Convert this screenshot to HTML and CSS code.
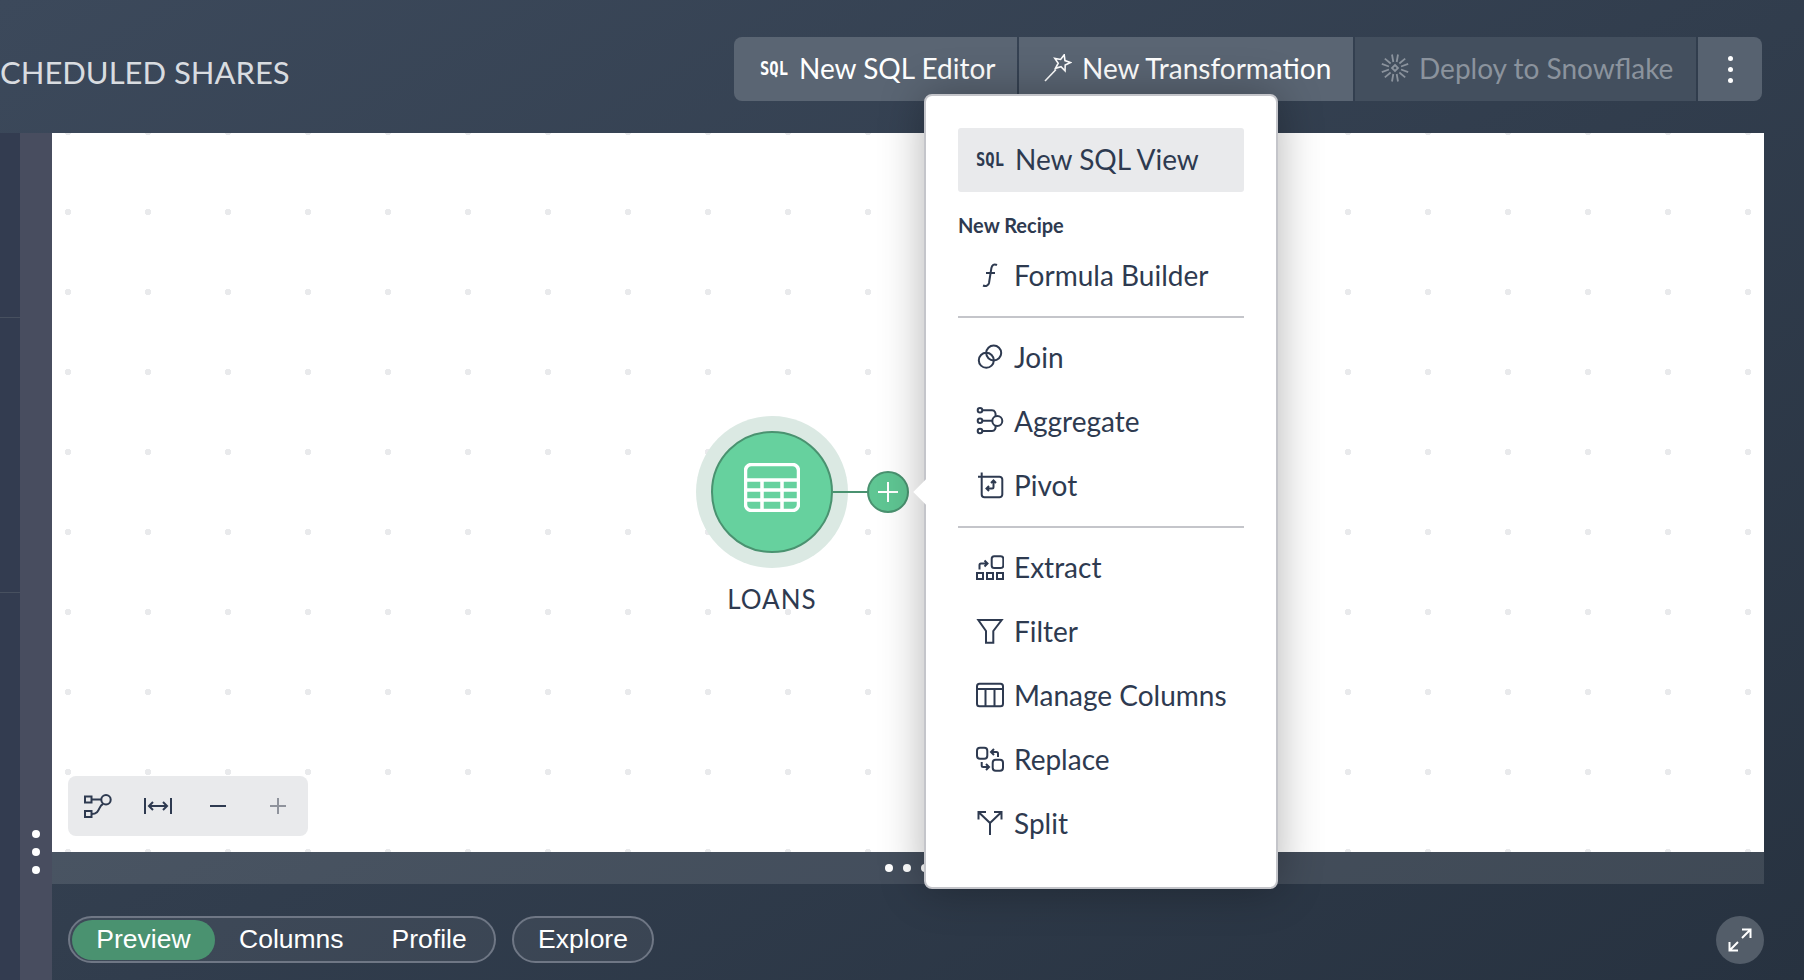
FILE: index.html
```html
<!DOCTYPE html>
<html lang="en">
<head>
  <meta charset="UTF-8">
  <meta name="viewport" content="width=device-width, initial-scale=1.0">
  <title>Scheduled Shares</title>
  <link rel="stylesheet" href="styles.css">
</head>
<body>
  <div class="page">
    <header class="topbar">
      <h1 class="title">CHEDULED SHARES</h1>
      <div class="actions">
        <button class="action first"><span class="sql">SQL</span>New SQL Editor</button>
        <button class="action second">
          <svg class="icon wand" viewBox="0 0 28 28"><path d="M1 27 12 15.500"/><path d="M20.200.8l.75 5.800 5.550 1.950-5.300 2.520-.15 5.830-4.050-4.230-5.600 1.680 2.800-5.150-3.330-4.830 5.770 1.080z"/></svg>
          New Transformation
        </button>
        <button class="action disabled">
          <svg class="icon flake" viewBox="0 0 30 30">
            <defs><path id="arm" d="M12 1.500l1.300 7.500M18 1.500L16.700 9"/></defs>
            <use href="#arm"/>
            <use href="#arm" transform="rotate(60 15 15)"/>
            <use href="#arm" transform="rotate(120 15 15)"/>
            <use href="#arm" transform="rotate(180 15 15)"/>
            <use href="#arm" transform="rotate(240 15 15)"/>
            <use href="#arm" transform="rotate(300 15 15)"/>
            <path d="M15 12 18 15 15 18 12 15z"/>
          </svg>
          Deploy to Snowflake
        </button>
        <button class="action more"><i></i><i></i><i></i></button>
      </div>
    </header>

    <div class="workspace">
      <div class="strip"></div>
      <div class="rail"><i></i><i></i><i></i></div>
      <div class="content">
        <section class="canvas">
          <div class="node">
            <div class="node-ring">
              <div class="node-circle">
                <svg class="table-icon" viewBox="0 0 56 49">
                  <rect x="1.500" y="1.500" width="53" height="46" rx="6"/>
                  <path d="M1.500 17h53M1.500 27h53M1.500 37h53M18 17v30.500M38 17v30.500"/>
                </svg>
              </div>
            </div>
            <div class="node-link"></div>
            <div class="node-add">
              <svg viewBox="0 0 22 22"><path d="M11 1v20M1 11h20"/></svg>
            </div>
            <div class="node-label">LOANS</div>
          </div>

          <div class="canvas-tools">
            <svg class="tool wide" viewBox="0 0 28 24"><rect x="1" y="2.500" width="6.500" height="6"/><rect x="1" y="17" width="6.500" height="6"/><circle cx="22" cy="5.700" r="4.700"/><path d="M7.500 5.500h9.800M19 10c-5 2-2.500 10-11.500 10"/></svg>
            <svg class="tool wide" viewBox="0 0 28 24"><path d="M1 4v16M27 4v16M5 12h18M9 8l-4 4 4 4M19 8l4 4-4 4"/></svg>
            <svg class="tool" viewBox="0 0 16 16"><path d="M0 8h16"/></svg>
            <svg class="tool off" viewBox="0 0 16 16"><path d="M0 8h16M8 0v16"/></svg>
          </div>
        </section>

        <div class="resizer"><i></i><i></i><i></i></div>

        <footer class="tabs">
          <div class="pill-group">
            <span class="pill active">Preview</span>
            <span class="pill">Columns</span>
            <span class="pill">Profile</span>
          </div>
          <div class="pill-group single">
            <span class="pill">Explore</span>
          </div>
          <button class="expand">
            <svg viewBox="0 0 24 24"><path d="M14 1.500h8.500V10M22.500 1.500l-8.500 8.500M10 22.500H1.500V14M1.500 22.500l8.500-8.500"/></svg>
          </button>
        </footer>
      </div>
    </div>

    <div class="menu">
      <div class="menu-arrow"></div>
      <div class="menu-item selected"><span class="sql">SQL</span>New SQL View</div>
      <div class="menu-label">New Recipe</div>
      <div class="menu-item">
        <svg class="icon" viewBox="0 0 28 28"><path d="M21 4c-3-1.500-5 0-5.600 3L13 22c-.6 3-3.500 3.500-6 2.500M10 12h9"/></svg>
        Formula Builder
      </div>
      <hr class="menu-rule">
      <div class="menu-item">
        <svg class="icon" viewBox="0 0 28 28"><circle cx="10.300" cy="17.300" r="7.500"/><circle cx="17.700" cy="10" r="7.500"/></svg>
        Join
      </div>
      <div class="menu-item">
        <svg class="icon" viewBox="0 0 28 28"><circle cx="4" cy="3.300" r="2.300"/><circle cx="4" cy="13.700" r="2.300"/><circle cx="4" cy="24" r="2.300"/><circle cx="21.300" cy="14" r="5"/><path d="M6.500 3.300H16c3 0 4 3 3.500 6M6.500 13.800H16M6.500 24H16c3 0 4-3 3.500-5.500"/></svg>
        Aggregate
      </div>
      <div class="menu-item">
        <svg class="icon" viewBox="0 0 28 28"><path d="M5.700 1.500v22c0 1.500 1 2.800 2.800 2.800h15c1.500 0 2.800-1.300 2.800-2.800v-15c0-1.500-1.300-2.800-2.800-2.800H2"/><path d="M17.500 10v6c0 1-.5 1.500-1.500 1.500h-5.500M15 12l2.500-2.500L20 12M13 15l-2.500 2.500L13 20"/></svg>
        Pivot
      </div>
      <hr class="menu-rule">
      <div class="menu-item">
        <svg class="icon" viewBox="0 0 28 28"><rect x="15.700" y="3.300" width="11.600" height="11.700" rx="2.500"/><rect x="1" y="20" width="6" height="6"/><rect x="11" y="20" width="6" height="6"/><rect x="21" y="20" width="6" height="6"/><path d="M3.500 16.500V12c0-1 .5-1.500 1.500-1.500h6M8.500 7.500l3 3-3 3"/></svg>
        Extract
      </div>
      <div class="menu-item">
        <svg class="icon" viewBox="0 0 28 28"><path d="M2.300 3h23.400l-8.400 11v11.700H10V14z"/></svg>
        Filter
      </div>
      <div class="menu-item">
        <svg class="icon" viewBox="0 0 28 28"><rect x="1" y="2.700" width="26" height="22.600" rx="2.500"/><path d="M1 8h26M9.500 8v17M18.500 8v17"/></svg>
        Manage Columns
      </div>
      <div class="menu-item">
        <svg class="icon" viewBox="0 0 28 28"><rect x="1" y="2.700" width="10.300" height="11" rx="3"/><rect x="16.700" y="14.700" width="10.300" height="11" rx="3"/><path d="M22 12V8.500c0-1-.5-1.500-1.500-1.500H15.500M18 4l-3 3 3 3M5.700 17v3.500c0 1 .5 1.500 1.500 1.500h5M10 19l3 3-3 3"/></svg>
        Replace
      </div>
      <div class="menu-item">
        <svg class="icon" viewBox="0 0 28 28"><path d="M14 26V14L3 3.500M14 14 25 3.500M2.500 10.500V3H10M18 3h7.500v7.500"/></svg>
        Split
      </div>
    </div>
  </div>
</body>
</html>
```

FILE: styles.css
```css
* {
  box-sizing: border-box;
}
html, body {
  margin: 0;
  padding: 0;
  height: 100%;
}
body {
  font-family: Lato, "Open Sans", sans-serif;
  color: #2e3a50;
  overflow: hidden;
}
button {
  border: none;
  font: inherit;
  cursor: pointer;
}
.page {
  position: relative;
  width: 1804px;
  height: 980px;
  overflow: hidden;
  display: flex;
  flex-direction: column;
  background: linear-gradient(150deg, #3c495b, #273240);
}

/* top bar */
.topbar {
  height: 133px;
  flex: none;
  display: flex;
  justify-content: space-between;
  padding: 37px 42px 0 0;
}
.title {
  margin: 16px 0 0;
  font-size: 31px;
  line-height: 38px;
  font-weight: 400;
  color: #d9dce0;
  white-space: nowrap;
}
.actions {
  display: flex;
  height: 64px;
  gap: 2px;
}
.action {
  display: flex;
  align-items: center;
  flex: none;
  height: 64px;
  color: #fff;
  background: #5a6573;
  font-size: 28px;
  white-space: nowrap;
  padding: 0 0 2px 25px;
}
.action.first {
  width: 283px;
  padding-left: 26px;
  border-radius: 8px 0 0 8px;
}
.action.second {
  width: 334px;
}
.action.disabled {
  width: 341px;
  background: #434f5e;
  color: #8b939d;
}
.action.more {
  width: 64px;
  padding: 0;
  gap: 6px;
  flex-direction: column;
  justify-content: center;
  border-radius: 0 8px 8px 0;
  background: #576270;
}
.action.more i {
  width: 5px;
  height: 5px;
  border-radius: 50%;
  background: #fff;
}
.sql {
  display: inline-block;
  width: 28px;
  margin-right: 11px;
  font-family: "DejaVu Sans Mono", monospace;
  font-weight: 700;
  font-size: 15.500px;
  transform: translateY(1px) scaleY(1.25);
}
.icon {
  width: 28px;
  height: 28px;
  flex: none;
  margin-right: 10px;
  fill: none;
  stroke: currentColor;
  stroke-width: 2;
}
.wand {
  stroke-width: 1.6;
}
.flake {
  width: 30px;
  height: 30px;
  margin-right: 9px;
  stroke-width: 1.8;
}

/* main area */
.workspace {
  flex: 1;
  display: flex;
  min-height: 0;
}
.strip {
  width: 20px;
  background: #333c50;
  background-image: linear-gradient(#47505f, #47505f), linear-gradient(#47505f, #47505f);
  background-size: 100% 1px;
  background-repeat: no-repeat;
  background-position: 0 184px, 0 459px;
}
.rail {
  width: 32px;
  background: #484d5f;
  display: flex;
  flex-direction: column;
  align-items: center;
  gap: 10px;
  padding-top: 697px;
}
.rail i,
.resizer i {
  width: 8px;
  height: 8px;
  border-radius: 50%;
  background: #fff;
  flex: none;
}
.content {
  width: 1712px;
  display: flex;
  flex-direction: column;
}
.canvas {
  position: relative;
  height: 719px;
  background-color: #fff;
  background-image: radial-gradient(circle at 40px 40px, #e9eaec 3px, transparent 3.5px);
  background-size: 80px 80px;
  background-position: -24px -41px;
}

/* node on the canvas */
.node {
  position: absolute;
  left: 644px;
  top: 283px;
  width: 240px;
  height: 200px;
}
.node-ring {
  width: 152px;
  height: 152px;
  border-radius: 50%;
  background: #dbe9e3;
  display: flex;
  align-items: center;
  justify-content: center;
}
.node-circle {
  width: 122px;
  height: 122px;
  border-radius: 50%;
  background: #66d19e;
  border: 2px solid #4a9270;
  display: flex;
  align-items: center;
  justify-content: center;
}
.table-icon {
  width: 56px;
  height: 49px;
  margin-bottom: 9px;
  fill: none;
  stroke: #fff;
  stroke-width: 3.500;
}
.node-link {
  position: absolute;
  left: 137px;
  top: 75px;
  width: 36px;
  height: 2px;
  background: #4a9270;
}
.node-add {
  position: absolute;
  left: 171px;
  top: 55px;
  width: 42px;
  height: 42px;
  border-radius: 50%;
  background: #5fc693;
  border: 2px solid #4a9270;
  display: flex;
  align-items: center;
  justify-content: center;
}
.node-add svg {
  width: 22px;
  height: 22px;
  fill: none;
  stroke: #fff;
  stroke-width: 2;
}
.node-label {
  position: absolute;
  left: 0;
  top: 168px;
  width: 152px;
  text-align: center;
  font-size: 26px;
  letter-spacing: 1px;
  line-height: 30px;
}

/* zoom tools */
.canvas-tools {
  position: absolute;
  left: 16px;
  bottom: 16px;
  width: 240px;
  height: 60px;
  border-radius: 8px;
  background: #e9eaec;
  display: flex;
  align-items: center;
  padding-left: 16px;
  gap: 32px;
}
.tool {
  width: 16px;
  height: 16px;
  flex: none;
  fill: none;
  stroke: #2e3a50;
  stroke-width: 2;
  margin-left: 6px;
}
.tool.wide {
  width: 28px;
  height: 24px;
  margin-left: 0;
}
.tool.off {
  stroke: #8f939c;
  margin-left: 12px;
}

.resizer {
  height: 32px;
  background: rgba(255, 255, 255, .11);
  display: flex;
  align-items: center;
  gap: 10px;
  padding-left: 833px;
}

/* tabs at the bottom */
.tabs {
  flex: 1;
  display: flex;
  align-items: flex-start;
  padding: 32px 0 0 16px;
  gap: 16px;
}
.pill-group {
  display: flex;
  align-items: center;
  height: 47px;
  padding: 0 2px;
  border: 2px solid #6f7785;
  border-radius: 24px;
  background: rgba(255, 255, 255, .06);
  width: 428px;
}
.pill-group.single {
  width: 142px;
  justify-content: center;
}
.pill {
  font-family: "Liberation Sans", Arial, sans-serif;
  font-size: 26.500px;
  color: #fff;
  height: 40px;
  line-height: 39px;
  padding: 0 24px;
  border-radius: 20px;
  white-space: nowrap;
}
.pill.active {
  background: #4a9270;
  width: 143px;
  text-align: center;
  padding: 0;
  margin-right: 0;
}
.expand {
  width: 48px;
  height: 48px;
  margin-left: auto;
  padding: 0;
  border-radius: 50%;
  background: #535d69;
  display: flex;
  align-items: center;
  justify-content: center;
}
.expand svg {
  width: 24px;
  height: 24px;
  fill: none;
  stroke: #fff;
  stroke-width: 2;
}

/* popup menu */
.menu {
  position: absolute;
  left: 924px;
  top: 94px;
  width: 354px;
  height: 795px;
  padding: 32px 32px 0;
  background: #fff;
  border: 2px solid #c4c5ca;
  border-radius: 8px;
  box-shadow: 0 0 45px rgba(0, 0, 0, .3);
}
.menu-arrow {
  position: absolute;
  left: -9px;
  top: 387px;
  width: 18px;
  height: 18px;
  background: #fff;
  transform: rotate(45deg);
}
.menu-item {
  position: relative;
  display: flex;
  align-items: center;
  height: 64px;
  padding-left: 18px;
  font-size: 28px;
  white-space: nowrap;
  border-radius: 3px;
}
.menu-item.selected {
  background: #e9eaec;
  padding-bottom: 2px;
}
.menu-label {
  margin: 21px 0 6px;
  font-size: 20px;
  line-height: 24px;
  font-weight: 700;
}
.menu-rule {
  margin: 9px 0 7px;
  height: 2px;
  border: none;
  background: #c4c5ca;
}
```
